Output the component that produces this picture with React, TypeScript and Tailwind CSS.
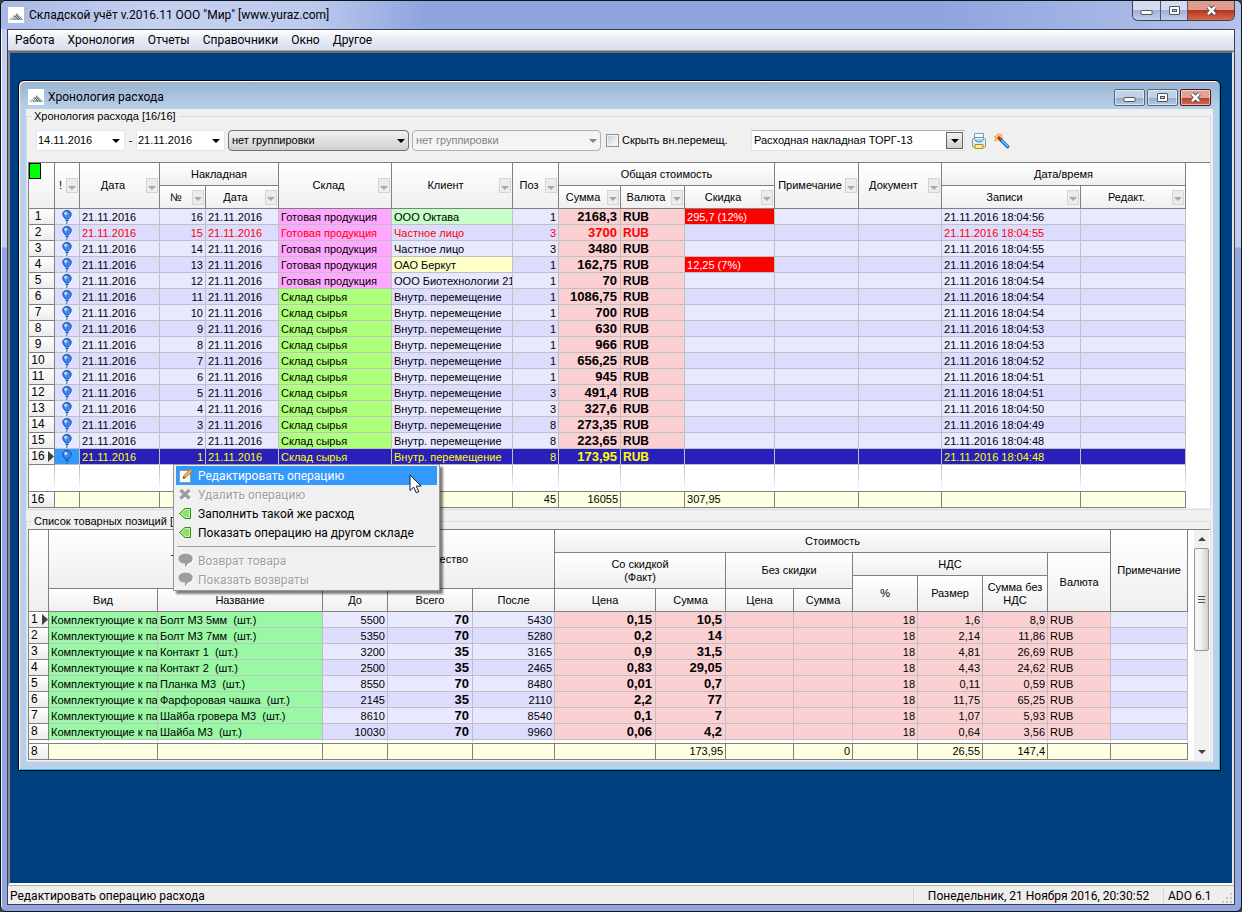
import type { ReactNode } from 'react';
import { clsx } from 'clsx';

interface Operation {
  no: number;
  storage: 'Готовая продукция' | 'Склад сырья';
  client: string;
  positions: number;
  sum: string;
  discount?: string;
  time: string;
  clientColor?: string;
}

interface Position {
  name: string;
  before: number;
  total: number;
  after: number;
  price: string;
  sum: string;
  vat: string;
  sumNoVat: string;
}

const READY = 'Готовая продукция';
const RAW = 'Склад сырья';
const MOVE = 'Внутр. перемещение';
const KIND = 'Комплектующие к па';

const OPERATIONS: Operation[] = [
  { no: 16, storage: READY, client: 'ООО Октава', positions: 1, sum: '2168,3', discount: '295,7 (12%)', time: '18:04:56', clientColor: 'bg-[#c8ffc8]' },
  { no: 15, storage: READY, client: 'Частное лицо', positions: 3, sum: '3700', time: '18:04:55' },
  { no: 14, storage: READY, client: 'Частное лицо', positions: 3, sum: '3480', time: '18:04:55' },
  { no: 13, storage: READY, client: 'ОАО Беркут', positions: 1, sum: '162,75', discount: '12,25 (7%)', time: '18:04:54', clientColor: 'bg-[#ffffc8]' },
  { no: 12, storage: READY, client: 'ООО Биотехнологии 21', positions: 1, sum: '70', time: '18:04:54' },
  { no: 11, storage: RAW, client: MOVE, positions: 1, sum: '1086,75', time: '18:04:54' },
  { no: 10, storage: RAW, client: MOVE, positions: 1, sum: '700', time: '18:04:54' },
  { no: 9, storage: RAW, client: MOVE, positions: 1, sum: '630', time: '18:04:53' },
  { no: 8, storage: RAW, client: MOVE, positions: 1, sum: '966', time: '18:04:53' },
  { no: 7, storage: RAW, client: MOVE, positions: 1, sum: '656,25', time: '18:04:52' },
  { no: 6, storage: RAW, client: MOVE, positions: 1, sum: '945', time: '18:04:51' },
  { no: 5, storage: RAW, client: MOVE, positions: 3, sum: '491,4', time: '18:04:51' },
  { no: 4, storage: RAW, client: MOVE, positions: 3, sum: '327,6', time: '18:04:50' },
  { no: 3, storage: RAW, client: MOVE, positions: 8, sum: '273,35', time: '18:04:49' },
  { no: 2, storage: RAW, client: MOVE, positions: 8, sum: '223,65', time: '18:04:48' },
  { no: 1, storage: RAW, client: MOVE, positions: 8, sum: '173,95', time: '18:04:48' },
];

const POSITIONS: Position[] = [
  { name: 'Болт М3 5мм  (шт.)', before: 5500, total: 70, after: 5430, price: '0,15', sum: '10,5', vat: '1,6', sumNoVat: '8,9' },
  { name: 'Болт М3 7мм  (шт.)', before: 5350, total: 70, after: 5280, price: '0,2', sum: '14', vat: '2,14', sumNoVat: '11,86' },
  { name: 'Контакт 1  (шт.)', before: 3200, total: 35, after: 3165, price: '0,9', sum: '31,5', vat: '4,81', sumNoVat: '26,69' },
  { name: 'Контакт 2  (шт.)', before: 2500, total: 35, after: 2465, price: '0,83', sum: '29,05', vat: '4,43', sumNoVat: '24,62' },
  { name: 'Планка М3  (шт.)', before: 8550, total: 70, after: 8480, price: '0,01', sum: '0,7', vat: '0,11', sumNoVat: '0,59' },
  { name: 'Фарфоровая чашка  (шт.)', before: 2145, total: 35, after: 2110, price: '2,2', sum: '77', vat: '11,75', sumNoVat: '65,25' },
  { name: 'Шайба гровера М3  (шт.)', before: 8610, total: 70, after: 8540, price: '0,1', sum: '7', vat: '1,07', sumNoVat: '5,93' },
  { name: 'Шайба М3  (шт.)', before: 10030, total: 70, after: 9960, price: '0,06', sum: '4,2', vat: '0,64', sumNoVat: '3,56' },
];

const OPERATION_COLS = [26, 25, 80, 46, 73, 113, 121, 46, 62, 64, 90, 84, 83, 139, 105];
const POSITION_COLS = [20, 109, 165, 65, 85, 82, 101, 70, 68, 59, 65, 65, 65, 63, 77];

const OPERATION_TOTALS = ['16', '', '', '', '', '', '', '45', '16055', '', '307,95', '', '', '', ''];
const POSITION_TOTALS = ['8', '', '', '', '', '', '', '173,95', '', '0', '', '26,55', '147,4', '', ''];

const MENU = ['Работа', 'Хронология', 'Отчеты', 'Справочники', 'Окно', 'Другое'];

function AppLogo() {
  return (
    <svg viewBox="0 0 16 16" className="h-4 w-4 shrink-0 bg-white" aria-hidden="true">
      <path d="M1 13l2-3 2.500 3z" fill="#c4c8ca" />
      <path d="M3 13l3-5.500 4 5.500z" fill="#98a0a4" />
      <path d="M5.500 13L8.500 6l6.500 7z" fill="#4a5a5e" />
      <path d="M6.500 7l5 6M8.500 6.500l5 6.500M5 9.500L7.500 13M3.500 11l1.300 2M7 10l2 3" stroke="#fff" strokeWidth=".8" fill="none" />
    </svg>
  );
}

function MinimizeGlyph() {
  return (
    <svg width="13" height="11" viewBox="0 0 13 11" aria-hidden="true">
      <rect x="1" y="5.500" width="11" height="4" rx=".5" fill="#fff" stroke="#4b5566" />
    </svg>
  );
}

function MaximizeGlyph() {
  return (
    <svg width="13" height="11" viewBox="0 0 13 11" aria-hidden="true">
      <rect x="1.500" y="1.500" width="10" height="8" rx=".5" fill="#fff" stroke="#4b5566" />
      <rect x="4.500" y="4.500" width="4" height="2" fill="#b9c8dc" stroke="#4b5566" />
    </svg>
  );
}

function CloseGlyph() {
  return (
    <svg width="13" height="11" viewBox="0 0 13 11" aria-hidden="true">
      <path d="M3 1.800l7 7.400M10 1.800L3 9.200" stroke="#4b4450" strokeWidth="4.400" />
      <path d="M3 1.800l7 7.400M10 1.800L3 9.200" stroke="#fff" strokeWidth="2.600" />
    </svg>
  );
}

function ArrowDown({ className }: { className?: string }) {
  return (
    <svg width="8" height="4" viewBox="0 0 8 4" className={clsx('shrink-0', className)} aria-hidden="true">
      <path d="M0 0h8L4 4z" fill="currentColor" />
    </svg>
  );
}

function Balloon() {
  return (
    <svg width="10" height="14" viewBox="0 0 10 14" className="mx-auto block" aria-hidden="true">
      <path d="M5 10.500c.8 1.200-.8 2-.2 3.500" stroke="#1c6aa8" fill="none" />
      <path d="M5 .5C2.300.5.800 2.200.8 4.300c0 2.200 1.900 3.200 2.700 4.700h3c.8-1.500 2.700-2.500 2.700-4.700C9.200 2.200 7.700.5 5 .5z" fill="#3f86f4" stroke="#0c4cb0" />
      <path d="M3.500 10.500h3" stroke="#0c4cb0" />
      <ellipse cx="3.800" cy="3.500" rx="1.500" ry="1.700" fill="#b8dcff" />
    </svg>
  );
}

function PrinterIcon() {
  return (
    <svg width="16" height="16" viewBox="0 0 16 16" aria-hidden="true">
      <path d="M3.500.5h9V7h-9z" fill="#fff" stroke="#8b96a0" />
      <rect x="1.500" y="5.500" width="13" height="8.500" rx="1" fill="#e8ecf0" stroke="#8a949e" />
      <path d="M3.500 4.500h9c0 3-1.500 4.500-4.500 4.500S3.500 7.500 3.500 4.500z" fill="#8fd8f8" stroke="#3f9cc8" />
      <path d="M4 5.500h8" stroke="#fff" />
      <path d="M4 11.500h8v4H4z" fill="#ffe98a" stroke="#b88a1c" />
    </svg>
  );
}

function WandIcon() {
  return (
    <svg width="16" height="16" viewBox="0 0 16 16" aria-hidden="true">
      <path d="M4.500 0l1 2.200L8 1 7 3.500 9 5 6.500 6 6 8.500 4 6.500.8 8 2 5 0 3.500l2.800-.8z" fill="#ffc860" stroke="#d8902c" strokeWidth=".6" />
      <path d="M4 4l4 4" stroke="#d02818" strokeWidth="3" />
      <path d="M7.500 7.500l6 6" stroke="#1b6fc0" strokeWidth="3.600" strokeLinecap="round" />
      <path d="M8 7.500l5.500 5.500" stroke="#69c4ff" strokeWidth="1.500" strokeLinecap="round" />
    </svg>
  );
}

function EditIcon() {
  return (
    <svg width="16" height="16" viewBox="0 0 16 16" aria-hidden="true">
      <path d="M1.500 2.500h11v12h-11z" fill="#f7f9fb" stroke="#8b98a6" />
      <path d="M5 10.500l1-3 6.500-6.500 2 1.900-6.500 6.600z" fill="#f6b73c" stroke="#9a6a1a" strokeWidth=".8" />
      <path d="M5 10.500l.7-2 1.400 1.300z" fill="#333" />
    </svg>
  );
}

function DeleteIcon() {
  return (
    <svg width="16" height="16" viewBox="0 0 16 16" aria-hidden="true">
      <path d="M3.500 4l9 8.500M12.500 4l-9 8.500" stroke="#fff" strokeWidth="3.400" />
      <path d="M2.500 3l9 8.500M11.500 3l-9 8.500" stroke="#9d9d9d" strokeWidth="3.400" />
    </svg>
  );
}

function BackIcon() {
  return (
    <svg width="16" height="16" viewBox="0 0 16 16" aria-hidden="true">
      <path d="M1.500 7.500l5.500-5h5.500v10H7z" fill="#8fe060" stroke="#2f8a28" />
      <path d="M3 7.500l4.500-4h4v8h-4z" fill="none" stroke="#d8f8c4" strokeWidth=".8" />
    </svg>
  );
}

function BubbleIcon() {
  return (
    <svg width="16" height="16" viewBox="0 0 16 16" aria-hidden="true">
      <path d="M8.500 1.800c4.200 0 7.200 1.900 7.200 4.900 0 2.600-2.200 4.300-4.700 4.700L8 15.500v-4C4.500 11.500 2 9.300 2 6.700z" fill="#fff" />
      <path d="M7.500.8c4.200 0 7.200 1.900 7.200 4.900 0 2.600-2.200 4.300-4.700 4.700L7 14.500v-4C3.200 10.500.5 8.600.5 5.700.5 2.700 3.500.8 7.500.8z" fill="#9d9d9d" />
    </svg>
  );
}

function Pointer() {
  return (
    <svg width="13" height="20" viewBox="0 0 13 20" className="absolute top-[393px] left-[390px]" aria-hidden="true">
      <path d="M1 1v15.500l3.700-3.500 2.500 5.700 2.600-1.100-2.500-5.500h4.900z" fill="#fff" stroke="#1b1b2a" />
    </svg>
  );
}

function ChildButton({ label, close = false, children }: { label: string; close?: boolean; children: ReactNode }) {
  return (
    <button
      type="button"
      aria-label={label}
      className={clsx(
        'flex h-[17px] w-[31px] items-center justify-center rounded-xs border shadow-[inset_0_0_0_1px_#ffffff80]',
        close
          ? 'border-[#4a1a1e] bg-linear-to-b from-[#e2a296] from-50% via-[#b83c2a] via-50% to-[#d46a50]'
          : 'border-[#54657e] bg-linear-to-b from-[#c0d2e6] from-50% via-[#8fabc9] via-50% to-[#b4cce2]',
      )}
    >
      {children}
    </button>
  );
}

function HeaderCell({
  children,
  colSpan,
  rowSpan,
  filter = false,
}: {
  children?: ReactNode;
  colSpan?: number;
  rowSpan?: number;
  filter?: boolean;
}) {
  return (
    <th
      colSpan={colSpan}
      rowSpan={rowSpan}
      className="border-r border-b border-[#808080] bg-linear-to-b from-white to-[#efefef] p-0 font-normal"
    >
      <div className={clsx('flex items-center', filter ? 'pr-px' : 'justify-center')}>
        <span className="flex-1 text-center leading-[13px]">{children}</span>
        {filter && (
          <button
            type="button"
            aria-label="Фильтр"
            className="flex h-[15px] w-3 shrink-0 items-center justify-center border border-[#d4d4d4] bg-[#ececec] pt-1 text-[#a8a8a8]"
          >
            <ArrowDown />
          </button>
        )}
      </div>
    </th>
  );
}

function Cell({ children, className }: { children?: ReactNode; className?: string }) {
  return (
    <td className={clsx('h-4 overflow-hidden border-r border-b border-[#c0c0c0] px-0.5 pt-px pb-0 leading-[14px] whitespace-pre', className)}>
      {children}
    </td>
  );
}

function RowNumber({ value, current = false, centered = false }: { value: number; current?: boolean; centered?: boolean }) {
  return (
    <th
      scope="row"
      className="h-4 border-r border-b border-[#808080] bg-linear-to-b from-white to-[#ececec] p-0 pl-0.5 text-left leading-[15px] font-normal text-black"
    >
      <div className="flex items-center justify-between">
        <span className={clsx('text-[12px]', centered && 'w-3.5 text-center')}>{value}</span>
        {current && (
          <svg width="6" height="11" viewBox="0 0 6 11" aria-hidden="true">
            <path d="M0 0l6 5.500L0 11z" fill="#404040" />
          </svg>
        )}
      </div>
    </th>
  );
}

function Columns({ widths }: { widths: number[] }) {
  return (
    <colgroup>
      {widths.map((width, i) => (
        <col key={i} style={{ width }} />
      ))}
    </colgroup>
  );
}

function FillerRow({ count, className }: { count: number; className: string }) {
  return (
    <tr className={className} aria-hidden="true">
      {Array.from({ length: count }, (_, i) => (
        <td
          key={i}
          className="bg-[linear-gradient(#b8b8b8,#ffffff)] bg-[length:1px_100%] bg-right bg-no-repeat p-0"
        />
      ))}
    </tr>
  );
}

function TotalsRow({ values, leftColumn }: { values: string[]; leftColumn?: number }) {
  return (
    <tr>
      {values.map((value, i) => (
        <td
          key={i}
          className={clsx(
            'h-[17px] border-y border-r border-[#808080] px-0.5 py-0 leading-[15px]',
            i === 0 ? 'bg-linear-to-b from-white to-[#ececec] text-[12px]' : 'bg-[#ffffe1]',
            i === 0 || i === leftColumn ? 'text-left' : 'text-right',
          )}
        >
          {value}
        </td>
      ))}
    </tr>
  );
}

function OperationsTable() {
  return (
    <table className="w-[1158px] table-fixed border-separate border-spacing-0 border-l border-[#808080]">
      <Columns widths={OPERATION_COLS} />
      <thead>
        <tr className="h-[23px]">
          <th rowSpan={2} className="border-r border-b border-[#808080] bg-linear-to-b from-white to-[#efefef] p-0 align-top">
            <button type="button" aria-label="Индикатор" className="block h-4 w-3 border border-black bg-[#00ff00]" />
          </th>
          <HeaderCell rowSpan={2} filter>!</HeaderCell>
          <HeaderCell rowSpan={2} filter>Дата</HeaderCell>
          <HeaderCell colSpan={2}>Накладная</HeaderCell>
          <HeaderCell rowSpan={2} filter>Склад</HeaderCell>
          <HeaderCell rowSpan={2} filter>Клиент</HeaderCell>
          <HeaderCell rowSpan={2} filter>Поз</HeaderCell>
          <HeaderCell colSpan={3}>Общая стоимость</HeaderCell>
          <HeaderCell rowSpan={2} filter>Примечание</HeaderCell>
          <HeaderCell rowSpan={2} filter>Документ</HeaderCell>
          <HeaderCell colSpan={2}>Дата/время</HeaderCell>
        </tr>
        <tr className="h-[23px]">
          <HeaderCell filter>№</HeaderCell>
          <HeaderCell filter>Дата</HeaderCell>
          <HeaderCell filter>Сумма</HeaderCell>
          <HeaderCell filter>Валюта</HeaderCell>
          <HeaderCell filter>Скидка</HeaderCell>
          <HeaderCell filter>Записи</HeaderCell>
          <HeaderCell filter>Редакт.</HeaderCell>
        </tr>
      </thead>
      <tbody>
        {OPERATIONS.map((op, i) => {
          const selected = op.no === 1;
          const storageColor = op.storage === READY ? 'bg-[#ffa8ff]' : 'bg-[#aeff7c]';
          return (
            <tr
              key={op.no}
              className={clsx(
                selected ? 'bg-[#2820b8] text-[#ffff00]' : i % 2 ? 'bg-[#dcdcff]' : 'bg-[#e8e8ff]',
                op.no === 15 && 'text-[#ff0000]',
              )}
            >
              <RowNumber value={i + 1} current={selected} centered />
              <Cell className={selected ? 'bg-[#3399ff]' : ''}>
                <Balloon />
              </Cell>
              <Cell>21.11.2016</Cell>
              <Cell className="text-right">{op.no}</Cell>
              <Cell>21.11.2016</Cell>
              <Cell className={selected ? '' : storageColor}>{op.storage}</Cell>
              <Cell className={op.clientColor}>{op.client}</Cell>
              <Cell className="text-right">{op.positions}</Cell>
              <Cell className={clsx('pr-[3px] text-right text-[13px] font-bold', !selected && 'bg-[#fad0d2]')}>{op.sum}</Cell>
              <Cell className={clsx('text-[12px] font-bold', !selected && 'bg-[#fad0d2]')}>RUB</Cell>
              <Cell className={op.discount && 'bg-[#ff0000] text-white'}>{op.discount}</Cell>
              <Cell />
              <Cell />
              <Cell>{`21.11.2016 ${op.time}`}</Cell>
              <Cell />
            </tr>
          );
        })}
        <FillerRow count={15} className="h-[26px]" />
      </tbody>
      <tfoot>
        <TotalsRow values={OPERATION_TOTALS} leftColumn={10} />
      </tfoot>
    </table>
  );
}

function PositionsTable() {
  const pink = 'bg-[#fad0d2]';
  const green = 'bg-[#98f8a4]';
  return (
    <table className="w-[1160px] table-fixed border-separate border-spacing-0 border-l border-[#808080]">
      <Columns widths={POSITION_COLS} />
      <thead>
        <tr className="h-[23px]">
          <HeaderCell rowSpan={4} />
          <HeaderCell rowSpan={3} colSpan={2}>Товар</HeaderCell>
          <HeaderCell rowSpan={3} colSpan={3}>Количество</HeaderCell>
          <HeaderCell colSpan={8}>Стоимость</HeaderCell>
          <HeaderCell rowSpan={4}>Примечание</HeaderCell>
        </tr>
        <tr className="h-[23px]">
          <HeaderCell rowSpan={2} colSpan={2}>
            Со скидкой
            <br />
            (Факт)
          </HeaderCell>
          <HeaderCell rowSpan={2} colSpan={2}>Без скидки</HeaderCell>
          <HeaderCell colSpan={3}>НДС</HeaderCell>
          <HeaderCell rowSpan={3}>Валюта</HeaderCell>
        </tr>
        <tr className="h-[13px]">
          <HeaderCell rowSpan={2}>%</HeaderCell>
          <HeaderCell rowSpan={2}>Размер</HeaderCell>
          <HeaderCell rowSpan={2}>
            Сумма без
            <br />
            НДС
          </HeaderCell>
        </tr>
        <tr className="h-[23px]">
          <HeaderCell>Вид</HeaderCell>
          <HeaderCell>Название</HeaderCell>
          <HeaderCell>До</HeaderCell>
          <HeaderCell>Всего</HeaderCell>
          <HeaderCell>После</HeaderCell>
          <HeaderCell>Цена</HeaderCell>
          <HeaderCell>Сумма</HeaderCell>
          <HeaderCell>Цена</HeaderCell>
          <HeaderCell>Сумма</HeaderCell>
        </tr>
      </thead>
      <tbody>
        {POSITIONS.map((pos, i) => (
          <tr key={pos.name} className={i % 2 ? 'bg-[#dcdcff]' : 'bg-[#e8e8ff]'}>
            <RowNumber value={i + 1} current={i === 0} />
            <Cell className={green}>{KIND}</Cell>
            <Cell className={green}>{pos.name}</Cell>
            <Cell className="text-right">{pos.before}</Cell>
            <Cell className="pr-[3px] text-right text-[13px] font-bold">{pos.total}</Cell>
            <Cell className="text-right">{pos.after}</Cell>
            <Cell className={clsx('pr-[3px] text-right text-[13px] font-bold', pink)}>{pos.price}</Cell>
            <Cell className={clsx('pr-[3px] text-right text-[13px] font-bold', pink)}>{pos.sum}</Cell>
            <Cell className={pink} />
            <Cell className={pink} />
            <Cell className={clsx('text-right', pink)}>18</Cell>
            <Cell className={clsx('text-right', pink)}>{pos.vat}</Cell>
            <Cell className={clsx('text-right', pink)}>{pos.sumNoVat}</Cell>
            <Cell className={pink}>RUB</Cell>
            <Cell />
          </tr>
        ))}
        <FillerRow count={15} className="h-[3px]" />
      </tbody>
      <tfoot>
        <TotalsRow values={POSITION_TOTALS} />
      </tfoot>
    </table>
  );
}

function DateField({ label, value }: { label: string; value: string }) {
  return (
    <div className="flex h-[21px] w-[89px] items-center rounded-xs border border-[#e2e6ec] bg-white pr-1">
      <input aria-label={label} defaultValue={value} className="w-full min-w-0 bg-transparent pl-px outline-none" />
      <ArrowDown />
    </div>
  );
}

function GroupSelect({ label, disabled = false }: { label: string; disabled?: boolean }) {
  return (
    <div className={clsx('relative h-[21px]', disabled ? 'w-[189px] text-[#838383]' : 'w-[181px]')}>
      <select
        aria-label={label}
        disabled={disabled}
        className={clsx(
          'h-full w-full appearance-none rounded-sm border pl-[3px]',
          disabled ? 'border-[#adb2b5] bg-[#f4f4f4]' : 'border-[#707070] bg-linear-to-b from-[#f2f2f2] to-[#cfcfcf]',
        )}
      >
        <option>нет группировки</option>
      </select>
      <ArrowDown className="pointer-events-none absolute top-[9px] right-1" />
    </div>
  );
}

function Toolbar() {
  return (
    <div className="flex h-[39px] items-center px-2 pb-1">
      <DateField label="Дата с" value="14.11.2016" />
      <span className="w-[11px] text-center">-</span>
      <DateField label="Дата по" value="21.11.2016" />
      <div className="ml-[3px] flex gap-[3px]">
        <GroupSelect label="Группировка" />
        <GroupSelect label="Вторая группировка" disabled />
      </div>
      <label className="ml-[5px] flex w-[145px] items-center gap-[3px] whitespace-nowrap">
        <input
          type="checkbox"
          className="h-[13px] w-[13px] appearance-none border border-[#8e8f8f] bg-linear-to-br from-[#c8ccd2] to-white shadow-[inset_0_0_0_1px_#f4f4f4]"
        />
        Скрыть вн.перемещ.
      </label>
      <div className="relative flex h-[21px] w-[214px] border border-[#e2e3ea] border-t-[#abadb3] bg-white">
        <select aria-label="Печатная форма" className="h-[19px] w-full appearance-none bg-transparent pl-0.5">
          <option>Расходная накладная ТОРГ-13</option>
        </select>
        <span className="pointer-events-none absolute top-px right-px flex h-[17px] w-[17px] items-center justify-center border border-[#606060] bg-linear-to-b from-[#f2f2f2] to-[#d0d0d0]">
          <ArrowDown />
        </span>
      </div>
      <button type="button" aria-label="Печать" className="ml-1.5">
        <PrinterIcon />
      </button>
      <button type="button" aria-label="Настроить форму" className="ml-[7px]">
        <WandIcon />
      </button>
    </div>
  );
}

function MenuItem({
  icon,
  children,
  active = false,
  disabled = false,
}: {
  icon: ReactNode;
  children: ReactNode;
  active?: boolean;
  disabled?: boolean;
}) {
  return (
    <button
      type="button"
      role="menuitem"
      disabled={disabled}
      className={clsx(
        'flex h-[19px] w-full items-center gap-1 pl-0.5 text-left whitespace-nowrap',
        active && 'bg-[#3399ff] text-white',
        disabled && 'text-[#a0a0a0] [text-shadow:1px_1px_0_#fff]',
      )}
    >
      {icon}
      {children}
    </button>
  );
}

function ContextMenu() {
  return (
    <div
      role="menu"
      className="absolute top-[383px] left-[154px] w-[267px] border border-[#979797] bg-[#f0f0f0] px-0.5 py-px font-['Roboto','Noto_Sans',sans-serif] text-[12px] shadow-[3px_3px_2px_#00000080]"
    >
      <MenuItem icon={<EditIcon />} active>Редактировать операцию</MenuItem>
      <MenuItem icon={<DeleteIcon />} disabled>Удалить операцию</MenuItem>
      <MenuItem icon={<BackIcon />}>Заполнить такой же расход</MenuItem>
      <MenuItem icon={<BackIcon />}>Показать операцию на другом складе</MenuItem>
      <div className="mx-px my-1 h-px bg-[#a0a0a0]" />
      <MenuItem icon={<BubbleIcon />} disabled>Возврат товара</MenuItem>
      <MenuItem icon={<BubbleIcon />} disabled>Показать возвраты</MenuItem>
    </div>
  );
}

function ScrollBar() {
  return (
    <div className="ml-1.5 flex w-[15px] flex-col items-center bg-[#f0f0f0]">
      <button type="button" aria-label="Вверх" className="flex h-[18px] w-full items-center justify-center text-[#404040]">
        <ArrowDown className="rotate-180" />
      </button>
      <div className="flex h-[103px] w-full flex-col items-center justify-center gap-0.5 rounded-xs border border-[#979797] bg-linear-to-r from-[#f5f5f5] from-40% to-[#cfcfcf]">
        <span className="h-px w-[7px] bg-[#505050]" />
        <span className="h-px w-[7px] bg-[#505050]" />
        <span className="h-px w-[7px] bg-[#505050]" />
      </div>
      <button type="button" aria-label="Вниз" className="mt-auto flex h-[17px] w-full items-center justify-center text-[#404040]">
        <ArrowDown />
      </button>
    </div>
  );
}

function ChildWindow() {
  return (
    <section className="relative mt-[27px] mr-[11px] ml-2 rounded-t-md border border-black bg-linear-to-b from-[#98b3d0] to-[#b9d0ea] to-[28px] px-[7px] pb-2 shadow-[inset_1px_1px_0_#fff,inset_-1px_-1px_0_#35c4dc]">
      <header className="flex h-7 items-center pt-1 pr-px pl-0.5 font-['Roboto','Noto_Sans',sans-serif] text-[12px]">
        <AppLogo />
        <h2 className="ml-1 flex-1">Хронология расхода</h2>
        <div className="flex gap-0.5 pr-px">
          <ChildButton label="Свернуть"><MinimizeGlyph /></ChildButton>
          <ChildButton label="Развернуть"><MaximizeGlyph /></ChildButton>
          <ChildButton label="Закрыть" close><CloseGlyph /></ChildButton>
        </div>
      </header>
      <div className="flex flex-col gap-1 bg-[#f0f0f0] pr-0.5">
        <fieldset className="min-w-0 border border-[#d5dfe5] pb-px pl-px">
          <legend className="ml-1 px-0.5 leading-[14px]">Хронология расхода [16/16]</legend>
          <Toolbar />
          <div className="overflow-hidden border-t border-[#808080] bg-white">
            <OperationsTable />
          </div>
        </fieldset>
        <fieldset className="min-w-0 border border-[#d5dfe5] py-px pl-px">
          <legend className="ml-1 px-0.5 leading-[14px]">Список товарных позиций [8]</legend>
          <div className="flex overflow-hidden border-t border-[#808080] bg-white">
            <PositionsTable />
            <ScrollBar />
          </div>
        </fieldset>
      </div>
      <ContextMenu />
      <Pointer />
    </section>
  );
}

function WindowButtons() {
  const cool = 'bg-linear-to-b from-[#d5dcf0] from-50% via-[#a3afd4] via-50% to-[#c4cfec]';
  return (
    <div className="flex h-5 self-start overflow-hidden rounded-b-md border border-t-0 border-[#39455f]">
      <button type="button" aria-label="Свернуть" className={clsx('flex w-[28px] items-center justify-center border-r border-[#4a5672]', cool)}>
        <MinimizeGlyph />
      </button>
      <button type="button" aria-label="Развернуть" className={clsx('flex w-[27px] items-center justify-center border-r border-[#4a5672]', cool)}>
        <MaximizeGlyph />
      </button>
      <button
        type="button"
        aria-label="Закрыть"
        className="flex w-[46px] items-center justify-center bg-linear-to-b from-[#dd9c8e] from-50% via-[#b8321c] via-50% to-[#d8694a]"
      >
        <CloseGlyph />
      </button>
    </div>
  );
}

export default function App() {
  return (
    <div className="h-screen overflow-hidden bg-[#404040]">
      <div className="flex h-full flex-col rounded-md border border-[#10141f] bg-linear-to-b from-[#c3cdee] from-[246px] to-[#92a6df] to-[247px] px-1.5 pb-1.5 font-['Liberation_Sans','Noto_Sans',sans-serif] text-[11px] text-black shadow-[inset_1px_1px_0_#ffffffc0]">
        <header className="-mx-1.5 flex h-7 items-center rounded-t-md bg-[linear-gradient(90deg,#a9b9e6,#c6d1f0_12%,#bccaee_25%,#8fa5de_34%,#8fa5de_76%,#b5c3ea)] pr-1.5 pl-[7px] font-['Roboto','Noto_Sans',sans-serif] text-[12px]">
          <AppLogo />
          <h1 className="ml-[5px] flex-1">Складской учёт v.2016.11 ООО "Мир" [www.yuraz.com]</h1>
          <WindowButtons />
        </header>
        <div className="flex min-h-0 flex-1 flex-col border border-[#3a3f52] bg-[#f0eded]">
          <nav className="flex h-[21px] shrink-0 items-center gap-[13px] border-b border-[#a0a0a8] bg-linear-to-b from-white via-[#eaedf6] via-40% to-[#d9dfef] px-[7px] font-['Roboto','Noto_Sans',sans-serif] text-[12px]">
            {MENU.map((item) => (
              <button key={item} type="button">
                {item}
              </button>
            ))}
          </nav>
          <main className="min-h-0 flex-1 overflow-hidden border-2 border-t-[#6d6d6d] border-r-[#e3e3e3] border-b-white border-l-[#8c8c8c] bg-[#003f80]">
            <ChildWindow />
          </main>
          <footer className="flex h-[19px] shrink-0 items-center border-t border-[#b0b0b0] pt-px pr-px pl-0.5 font-['Roboto','Noto_Sans',sans-serif] text-[12px]">
            <span className="flex-1">Редактировать операцию расхода</span>
            <span className="flex h-4 w-[250px] items-center justify-center border-l border-[#d7d7d7]">Понедельник, 21 Ноября 2016, 20:30:52</span>
            <span className="flex h-4 w-[59px] items-center border-l border-[#d7d7d7] pl-1">ADO 6.1</span>
            <svg width="11" height="11" viewBox="0 0 11 11" className="self-end" aria-hidden="true">
              <path d="M8 0h2v2H8zM4 4h2v2H4zM8 4h2v2H8zM0 8h2v2H0zM4 8h2v2H4zM8 8h2v2H8z" fill="#c4c4c8" />
            </svg>
          </footer>
        </div>
      </div>
    </div>
  );
}
